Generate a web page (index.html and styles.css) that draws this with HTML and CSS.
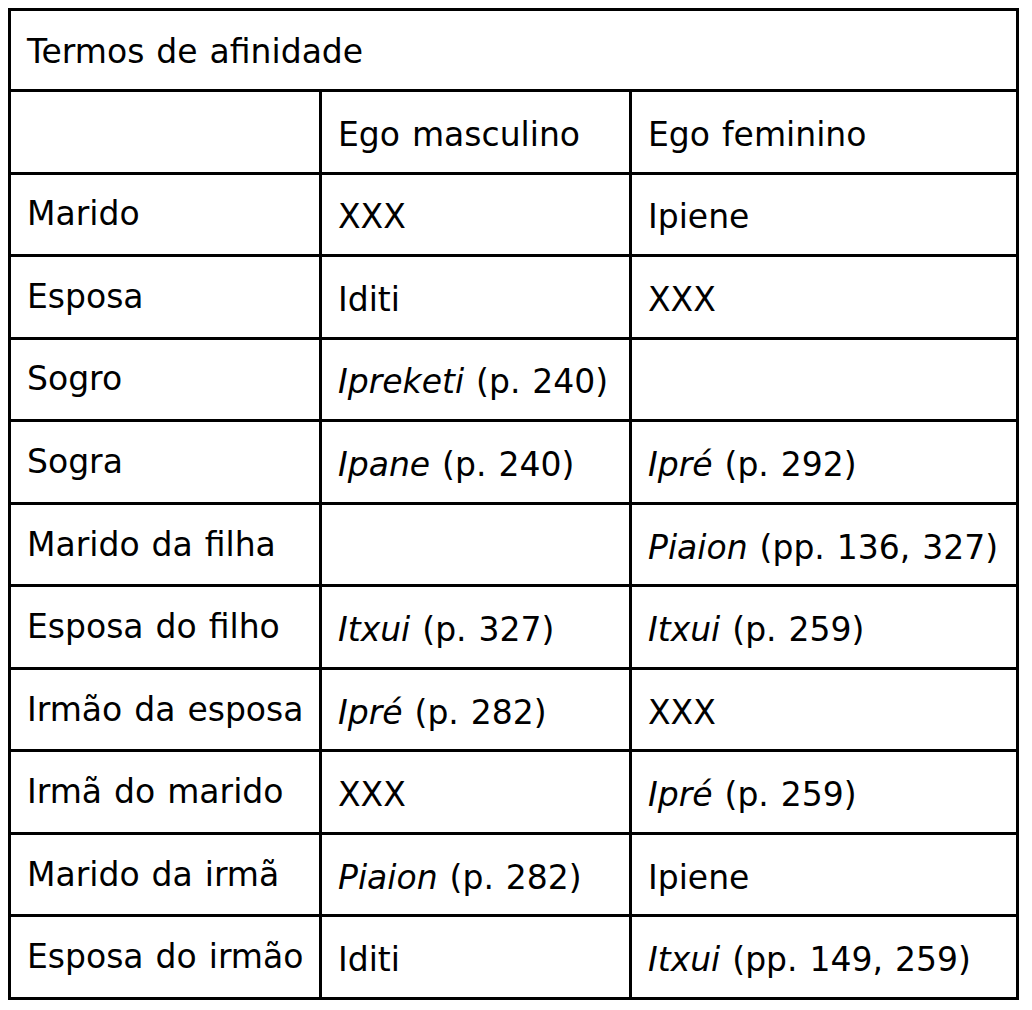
FILE: index.html
```html
<!DOCTYPE html>
<html lang="pt">
<head>
<meta charset="utf-8">
<link rel="stylesheet" href="styles.css">
</head>
<body>
<div class="table">
  <div class="cell title">Termos de afinidade</div>

  <div class="cell first"></div>
  <div class="cell">Ego masculino</div>
  <div class="cell">Ego feminino</div>

  <div class="cell first">Marido</div>
  <div class="cell">XXX</div>
  <div class="cell">Ipiene</div>

  <div class="cell first">Esposa</div>
  <div class="cell">Iditi</div>
  <div class="cell">XXX</div>

  <div class="cell first">Sogro</div>
  <div class="cell"><span><em>Ipreketi</em> (p. 240)</span></div>
  <div class="cell"></div>

  <div class="cell first">Sogra</div>
  <div class="cell"><span><em>Ipane</em> (p. 240)</span></div>
  <div class="cell"><span><em>Ipré</em> (p. 292)</span></div>

  <div class="cell first">Marido da filha</div>
  <div class="cell"></div>
  <div class="cell"><span><em>Piaion</em> (pp. 136, 327)</span></div>

  <div class="cell first">Esposa do filho</div>
  <div class="cell"><span><em>Itxui</em> (p. 327)</span></div>
  <div class="cell"><span><em>Itxui</em> (p. 259)</span></div>

  <div class="cell first">Irmão da esposa</div>
  <div class="cell"><span><em>Ipré</em> (p. 282)</span></div>
  <div class="cell">XXX</div>

  <div class="cell first">Irmã do marido</div>
  <div class="cell">XXX</div>
  <div class="cell"><span><em>Ipré</em> (p. 259)</span></div>

  <div class="cell first">Marido da irmã</div>
  <div class="cell"><span><em>Piaion</em> (p. 282)</span></div>
  <div class="cell">Ipiene</div>

  <div class="cell first">Esposa do irmão</div>
  <div class="cell">Iditi</div>
  <div class="cell"><span><em>Itxui</em> (pp. 149, 259)</span></div>
</div>
</body>
</html>
```

FILE: styles.css
```css
html, body {
  margin: 0;
  padding: 0;
  background: #ffffff;
}

body {
  padding: 8px;
  font-family: "DejaVu Sans", Verdana, sans-serif;
  font-size: 33px;
  word-spacing: 1.5px;
  color: #000000;
}

.table {
  display: grid;
  grid-template-columns: 311px 310px 387px;
  grid-template-rows: 81px;
  grid-auto-rows: 82.55px;
  width: 1011px;
  box-sizing: border-box;
  border-top: 3px solid #000;
  border-left: 3px solid #000;
}

.cell {
  box-sizing: border-box;
  border-right: 3px solid #000;
  border-bottom: 3px solid #000;
  padding: 6px 6px 0 16px;
  display: flex;
  align-items: center;
  white-space: nowrap;
  line-height: 1.15;
}

.cell em {
  font-style: italic;
}

.title {
  grid-column: 1 / -1;
  padding-top: 4px;
}

.first {
  padding-bottom: 6px;
}
```
